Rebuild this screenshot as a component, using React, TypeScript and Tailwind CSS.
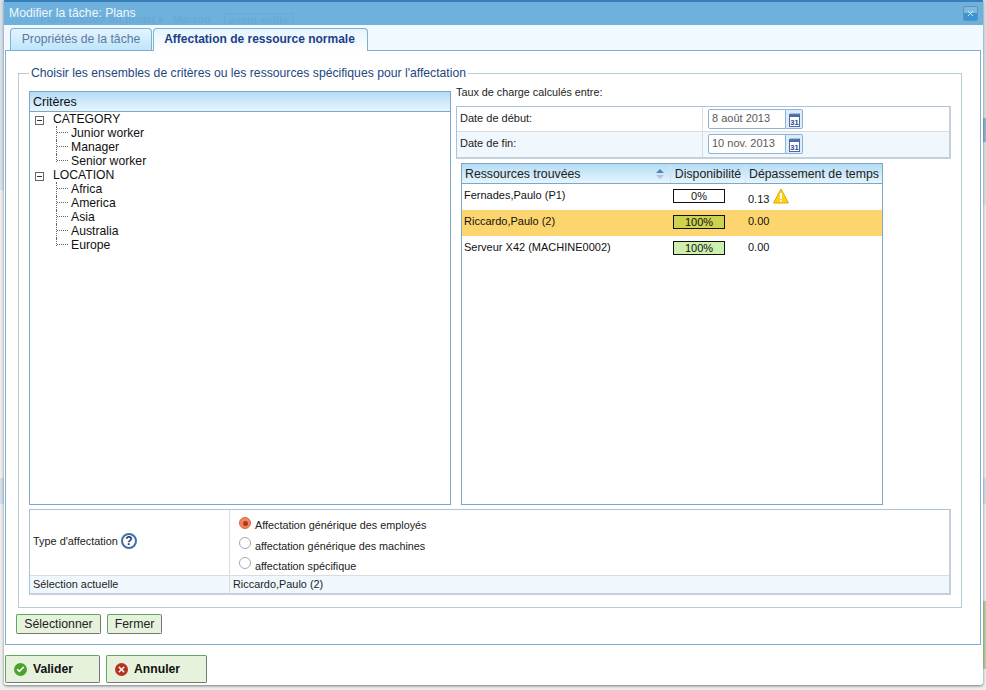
import { Check, X } from "lucide-react";

const font = "font-['Liberation_Sans',Arial,sans-serif]";

const tree = [
    { name: "CATEGORY", items: ["Junior worker", "Manager", "Senior worker"] },
    { name: "LOCATION", items: ["Africa", "America", "Asia", "Australia", "Europe"] },
];

const resources = [
    { name: "Fernades,Paulo (P1)", pct: "0%", bar: "bg-white", over: "0.13", warn: true, row: "bg-white h-[26px]" },
    { name: "Riccardo,Paulo (2)", pct: "100%", bar: "bg-[#cdd24f]", over: "0.00", warn: false, row: "bg-[#fdd56f] h-[26px]" },
    { name: "Serveur X42 (MACHINE0002)", pct: "100%", bar: "bg-[#cdf0ae]", over: "0.00", warn: false, row: "bg-white h-[26px]" },
];

function CalendarIcon() {
    return (
        <svg width="13" height="15" viewBox="0 0 13 15">
            <rect x="1.5" y="3.5" width="10" height="11" fill="#fff" stroke="#4a6aa8" />
            <rect x="1" y="2" width="11" height="3" fill="#4a6aa8" />
            <path d="M3 1v2M5 1v2M7 1v2M9 1v2M11 1v1" stroke="#6a86bc" />
            <text x="6.5" y="12.5" textAnchor="middle" fontSize="7.5" fontWeight="bold" fill="#2a4688" fontFamily="Liberation Sans">
                31
            </text>
        </svg>
    );
}

function DateField({ value }: { value: string }) {
    return (
        <div className="flex h-5 w-[95px]">
            <div className="flex-1 border border-[#8fb2d3] rounded-l-[2px] bg-white pl-[3px] text-[11px] leading-[17px] text-[#5a5a5a]">
                {value}
            </div>
            <div className="w-[17px] flex items-center justify-center border border-l-0 border-[#8fb2d3] bg-[#dcecf8] rounded-r-[2px]">
                <CalendarIcon />
            </div>
        </div>
    );
}

function Radio({ checked }: { checked?: boolean }) {
    return (
        <span
            className={`w-3 h-3 rounded-full border flex items-center justify-center ${
                checked ? "border-[#d9653c] bg-[#f0855f]" : "border-[#a8a8a8] bg-white"
            }`}
        >
            {checked && <span className="w-[5px] h-[5px] rounded-full bg-[#a83c1c]" />}
        </span>
    );
}

function SmallButton({ label, w }: { label: string; w: string }) {
    return (
        <button
            type="button"
            className={`${w} h-5 border border-[#5fa85f] border-b-[#777] border-r-[#777] rounded-[2px] bg-[#e6f2dc] text-[12.3px] leading-[18px] text-[#222] text-center`}
        >
            {label}
        </button>
    );
}

function BigButton({ label, w, green }: { label: string; w: string; green?: boolean }) {
    return (
        <button
            type="button"
            className={`${w} h-[28px] flex items-center border border-[#5fa85f] border-b-[#777] border-r-[#777] rounded-[2px] bg-[#e6f2dc] text-[12.2px] font-bold text-[#111] pl-[8px]`}
        >
            <span
                className={`w-[13px] h-[13px] rounded-full flex items-center justify-center mr-[6px] ${
                    green ? "bg-[#4aa32a]" : "bg-[#b5321e]"
                }`}
            >
                {green ? (
                    <Check size={9} color="#fff" strokeWidth={4} />
                ) : (
                    <X size={9} color="#fff" strokeWidth={4} />
                )}
            </span>
            {label}
        </button>
    );
}

export default function App() {
    return (
        <div className={`${font} relative w-[986px] h-[690px] bg-[#eeeeee] overflow-hidden pl-[4px]`}>
            {/* page behind the dialog, only its edges show */}
            <div className="absolute left-0 top-0 w-[4px] h-[190px] bg-[#d4e0ea]" />
            <div className="absolute left-0 top-[478px] w-[4px] h-[26px] bg-[#d2dfe9]" />
            <div className="absolute right-0 top-0 w-[3px] h-[205px] bg-[#d8e2ea]" />
            <div className="absolute right-0 top-[118px] w-[3px] h-[24px] bg-[#93b3cc]" />
            <div className="absolute right-0 top-[478px] w-[3px] h-[26px] bg-[#d2dfe9]" />
            <div className="absolute right-0 top-[601px] w-[3px] h-[68px] bg-[#b7cfa3]" />

            <div className="relative w-[979px] h-[685px] bg-white rounded-b-[3px] shadow-[0_1px_3px_rgba(0,0,0,0.5)] flex flex-col">
                {/* title bar, the page's breadcrumb shines through it */}
                <div className="relative h-[25px] shrink-0 bg-[#6fb1dd] border-t-[2px] border-[#3a7fbd] flex items-center justify-between pl-[5px] pr-[5px] overflow-hidden">
                    <span className="absolute left-[36px] top-[11px] flex text-[11px] leading-[12px] font-bold text-[#68a9d5] whitespace-nowrap">
                        <span className="w-[133px]">Planification du projet ▸</span>
                        <span className="w-[51px]">Maison</span>
                        <span className="w-[69px] h-[14px] border border-[#68a9d5] rounded-[2px] text-center">avant-veille</span>
                    </span>
                    <span className="relative text-[12.2px] text-[#f0f6fb]">Modifier la tâche: Plans</span>
                    <button
                        type="button"
                        className="relative w-[15px] h-[15px] rounded-[2px] border border-[#5b93bd] bg-[linear-gradient(#7fb9de_50%,#3b95d4_50%)] flex items-center justify-center"
                    >
                        <X size={9} color="#fff" strokeWidth={2} />
                    </button>
                </div>

                {/* tabs */}
                <div className="h-[25px] shrink-0 bg-[#f0f9ff] flex items-end pl-[6px] gap-[1px]">
                    <div className="w-[142px] h-[22px] border border-b-0 border-[#7fb0d0] rounded-t-[4px] bg-[linear-gradient(#e4f4fd,#bfe5fb)] text-[12.2px] leading-[20px] text-[#5a7ba0] text-center">
                        Propriétés de la tâche
                    </div>
                    <div className="w-[215px] h-[23px] -mb-px z-10 border border-b-0 border-[#7fb0d0] rounded-t-[4px] bg-[linear-gradient(#e4f4fd,#fff)] text-[12px] leading-[21px] font-bold text-[#1e3f87] text-center pr-[2px]">
                        Affectation de ressource normale
                    </div>
                </div>

                {/* tab panel */}
                <div className="ml-[1px] w-[976px] h-[595px] shrink-0 border border-[#7fb0d0] bg-white pl-[12px] pt-[15px]">
                    <fieldset className="w-[944px] h-[542px] border border-[#b5cdd6] pl-[10px] pr-[10px] pt-0">
                        <legend className="ml-0 px-[2px] text-[12.2px] leading-[14px] text-[#23467f]">
                            Choisir les ensembles de critères ou les ressources spécifiques pour l'affectation
                        </legend>

                        <div className="flex mt-[11px]">
                            {/* criteria tree */}
                            <div className="w-[422px] h-[414px] border border-[#7fa7c5]">
                                <div className="h-5 border-b border-[#7fa7c5] bg-[linear-gradient(#b4dcf5,#e6f5fd)] pl-[3px] text-[12.5px] leading-[20px] text-[#111]">
                                    Critères
                                </div>
                                <div className="pl-[5px] text-[12.2px] leading-[14px] text-[#111]">
                                    {tree.map((group) => (
                                        <div key={group.name}>
                                            <div className="flex items-center h-[14px]">
                                                <span className="w-[9px] h-[9px] border border-[#666] flex items-center justify-center mr-[9px] mt-[2px]">
                                                    <span className="w-[5px] h-px bg-[#333]" />
                                                </span>
                                                {group.name}
                                            </div>
                                            {group.items.map((item, i) => (
                                                <div key={item} className="flex h-[14px] pl-[21px]">
                                                    <span
                                                        className={`w-[1px] border-l border-dotted border-[#666] ${
                                                            i === group.items.length - 1 ? "h-[8px]" : "h-[14px]"
                                                        }`}
                                                    />
                                                    <span className="w-[11px] h-[7px] border-b border-dotted border-[#666] mr-[3px]" />
                                                    {item}
                                                </div>
                                            ))}
                                        </div>
                                    ))}
                                </div>
                            </div>

                            {/* right column */}
                            <div className="w-[495px] ml-[5px] shrink-0">
                                <div className="h-[21px] text-[10.8px] leading-[14px] text-[#222] -mt-[6px]">
                                    Taux de charge calculés entre:
                                </div>
                                <div className="border border-[#a8c3db] border-r-[2px] border-r-[#c4d0dc] border-b-[2px] border-b-[#c4d0dc] text-[11px] text-[#222]">
                                    <div className="flex h-[25px] border-b border-[#dcdcdc] bg-white">
                                        <div className="w-[246px] border-r border-[#dcdcdc] pl-[3px] leading-[22px]">
                                            Date de début:
                                        </div>
                                        <div className="pl-[5px] pt-[2px]">
                                            <DateField value="8 août 2013" />
                                        </div>
                                    </div>
                                    <div className="flex h-[25px] bg-[#f0f8fd]">
                                        <div className="w-[246px] border-r border-[#dcdcdc] pl-[3px] leading-[22px]">
                                            Date de fin:
                                        </div>
                                        <div className="pl-[5px] pt-[2px]">
                                            <DateField value="10 nov. 2013" />
                                        </div>
                                    </div>
                                </div>

                                {/* resources */}
                                <div className="ml-[5px] mt-[4px] w-[422px] h-[342px] border border-[#7fa7c5]">
                                    <div className="flex h-[20px] border-b border-[#7fa7c5] bg-[linear-gradient(#b4dcf5,#e6f5fd)] text-[12.3px] leading-[20px] text-[#222]">
                                        <div className="w-[209px] pl-[3px] border-r border-[#cfe3f0] flex justify-between pr-[6px] items-center">
                                            Ressources trouvées
                                            <svg width="8" height="12" viewBox="0 0 8 12">
                                                <path d="M0 5 4 1l4 4z" fill="#4a86b8" />
                                                <path d="M0 7l4 4 4-4z" fill="#b8c4cc" />
                                            </svg>
                                        </div>
                                        <div className="w-[75px] text-center border-r border-[#cfe3f0]">Disponibilité</div>
                                        <div className="flex-1 pl-[3px] whitespace-nowrap">Dépassement de temps</div>
                                    </div>
                                    {resources.map((r) => (
                                        <div key={r.name} className={`flex ${r.row} text-[11px] text-[#111]`}>
                                            <div className="w-[209px] pl-[2px] pt-[4px] leading-[14px]">{r.name}</div>
                                            <div className="w-[75px] pl-[2px] pt-[5px]">
                                                <div
                                                    className={`w-[52px] h-[14px] border border-[#111] ${r.bar} text-center text-[11px] leading-[13px]`}
                                                >
                                                    {r.pct}
                                                </div>
                                            </div>
                                            <div className="flex-1 pl-[2px] pt-[4px] leading-[14px] flex items-start">
                                                <span className={r.warn ? "mt-[4px]" : ""}>{r.over}</span>
                                                {r.warn && (
                                                    <svg width="16" height="16" viewBox="0 0 16 16" className="ml-[4px] mt-0">
                                                        <path d="M8 1 15.5 15H.5z" fill="#fcd116" stroke="#e0a800" strokeLinejoin="round" />
                                                        <path d="M8 5v6" stroke="#fff" strokeWidth="2" />
                                                        <circle cx="8" cy="13" r="1" fill="#fff" />
                                                    </svg>
                                                )}
                                            </div>
                                        </div>
                                    ))}
                                </div>
                            </div>
                        </div>

                        {/* assignment type */}
                        <div className="mt-[4px] w-[922px] border border-[#a8c3db] border-r-[2px] border-r-[#c4d0dc] border-b-[2px] border-b-[#c4d0dc] text-[10.9px] text-[#222]">
                            <div className="flex h-[66px] border-b border-[#dcdcdc]">
                                <div className="w-[200px] border-r border-[#dcdcdc] pl-[3px] pb-[3px] flex items-center gap-[3px]">
                                    Type d'affectation
                                    <span className="w-[16px] h-[16px] rounded-full border-2 border-[#3f6fa8] bg-white text-[#1c3a66] text-[12px] font-bold leading-[12px] text-center">
                                        ?
                                    </span>
                                </div>
                                <div className="pl-[9px] pt-[7px] text-[10.8px]">
                                    <div className="flex items-start h-5 gap-[4px]">
                                        <Radio checked />
                                        <span className="leading-[14px] mt-[1px]">Affectation générique des employés</span>
                                    </div>
                                    <div className="flex items-start h-5 gap-[4px]">
                                        <Radio />
                                        <span className="leading-[14px] mt-[2px]">affectation générique des machines</span>
                                    </div>
                                    <div className="flex items-start h-5 gap-[4px]">
                                        <Radio />
                                        <span className="leading-[14px] mt-[2px]">affectation spécifique</span>
                                    </div>
                                </div>
                            </div>
                            <div className="flex h-[17px] bg-[#f0f8fd] leading-[16px]">
                                <div className="w-[200px] border-r border-[#dcdcdc] pl-[3px]">Sélection actuelle</div>
                                <div className="pl-[3px]">Riccardo,Paulo (2)</div>
                            </div>
                        </div>
                    </fieldset>

                    <div className="flex gap-[6px] mt-[6px] -ml-[2px]">
                        <SmallButton label="Sélectionner" w="w-[85px]" />
                        <SmallButton label="Fermer" w="w-[55px]" />
                    </div>
                </div>

                {/* footer */}
                <div className="flex gap-[6px] pl-[1px] pt-[10px]">
                    <BigButton label="Valider" w="w-[95px]" green />
                    <BigButton label="Annuler" w="w-[101px]" />
                </div>
            </div>
        </div>
    );
}
